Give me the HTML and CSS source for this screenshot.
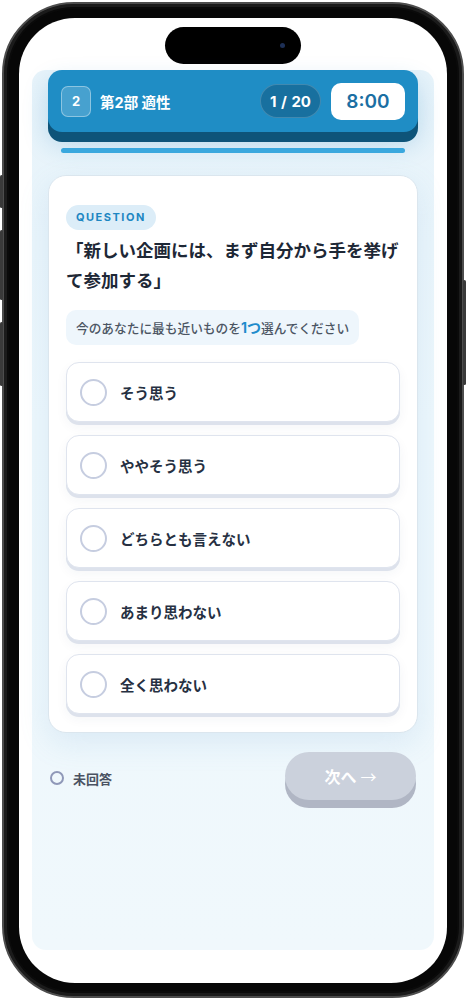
FILE: index.html
```html
<!DOCTYPE html>
<html lang="ja">
<head>
    <meta charset="UTF-8">
    <meta name="viewport" content="width=device-width, initial-scale=1.0">
    <title>適性検査 第2部</title>
    <link rel="stylesheet" href="styles.css">
</head>
<body>
    <div class="phone">
        <span class="side-btn btn-action"></span>
        <span class="side-btn btn-vol-up"></span>
        <span class="side-btn btn-vol-down"></span>
        <span class="side-btn btn-power"></span>

        <div class="screen">
            <div class="island"><span class="cam"></span></div>

            <div class="app">
                <header class="topbar">
                    <div class="part">
                        <span class="part-no">2</span>
                        <span class="part-name">第2部 適性</span>
                    </div>
                    <div class="status">
                        <span class="count">1 / 20</span>
                        <span class="timer">8:00</span>
                    </div>
                </header>

                <div class="progress"></div>

                <section class="card">
                    <span class="tag">QUESTION</span>
                    <h1 class="question">「新しい企画には、まず自分から手を挙げて参加する」</h1>
                    <p class="hint">今のあなたに最も近いものを<b>1つ</b>選んでください</p>

                    <ul class="options">
                        <li class="option"><span class="radio"></span>そう思う</li>
                        <li class="option"><span class="radio"></span>ややそう思う</li>
                        <li class="option"><span class="radio"></span>どちらとも言えない</li>
                        <li class="option"><span class="radio"></span>あまり思わない</li>
                        <li class="option"><span class="radio"></span>全く思わない</li>
                    </ul>
                </section>

                <div class="footer">
                    <div class="answer-state"><span class="dot"></span>未回答</div>
                    <button class="next" disabled>次へ <span class="arrow">→</span></button>
                </div>
            </div>
        </div>
    </div>
</body>
</html>
```

FILE: styles.css
```css
* { box-sizing: border-box; }

body {
    margin: 0;
    background: #ffffff;
    font-family: Inter, "Noto Sans CJK JP", "Noto Sans", sans-serif;
    color: #1e2836;
}

/* phone frame */
.phone {
    position: relative;
    width: 462px;
    height: 996px;
    margin: 2px 0 0 2px;
    padding: 14px 15px 13px 15px;
    background: #070707;
    border: 2px solid #4d4d4d;
    border-radius: 72px;
    box-shadow: inset 0 0 0 3px #1b1b1b, inset 0 0 0 5px #0a0a0a;
}

.side-btn {
    position: absolute;
    width: 3px;
    background: #3a3a3a;
    border-radius: 2px;
}
.btn-action { left: -4px; top: 171px; height: 33px; }
.btn-vol-up { left: -4px; top: 226px; height: 70px; }
.btn-vol-down { left: -4px; top: 318px; height: 64px; }
.btn-power { right: -4px; top: 276px; height: 105px; }

.screen {
    height: 100%;
    background: #ffffff;
    border-radius: 56px;
    overflow: hidden;
    padding-top: 9px;
}

.island {
    width: 136px;
    height: 37px;
    margin: 0 auto;
    background: #000;
    border-radius: 19px;
    display: flex;
    align-items: center;
    justify-content: flex-end;
    padding-right: 16px;
}
.cam {
    width: 5px;
    height: 5px;
    border-radius: 50%;
    background: #1d2f55;
}

/* app */
.app {
    height: 880px;
    margin: 6px 13px 0;
    padding: 0 16px;
    border-radius: 14px;
    background: linear-gradient(180deg, #e7f3fa 0%, #edf7fc 40%, #f0f8fc 100%);
    display: flex;
    flex-direction: column;
}

.topbar {
    height: 62px;
    padding: 0 13px;
    background: #1f8dc5;
    border-radius: 14px;
    box-shadow: 0 10px 0 #0e5479, 0 12px 24px rgba(30, 130, 190, 0.25);
    display: flex;
    align-items: center;
    justify-content: space-between;
    color: #fff;
}

.part { display: flex; align-items: center; gap: 9px; }
.part-no {
    width: 30px;
    height: 31px;
    border-radius: 7px;
    background: rgba(255, 255, 255, 0.18);
    border: 1px solid rgba(255, 255, 255, 0.38);
    display: flex;
    align-items: center;
    justify-content: center;
    font-size: 13px;
    font-weight: 700;
}
.part-name { font-size: 14.5px; font-weight: 700; }

.status { display: flex; align-items: center; gap: 10px; }
.count {
    width: 61px;
    height: 34px;
    border-radius: 17px;
    background: #18709f;
    border: 1px solid rgba(255, 255, 255, 0.18);
    display: flex;
    align-items: center;
    justify-content: center;
    font-size: 15px;
    font-weight: 700;
    word-spacing: 1px;
}
.timer {
    width: 74px;
    height: 37px;
    border-radius: 10px;
    background: #fff;
    color: #1b6fa3;
    display: flex;
    align-items: center;
    justify-content: center;
    font-size: 19px;
    font-weight: 600;
}

.progress {
    height: 5px;
    margin: 16px 13px 0;
    border-radius: 3px;
    background: #3aa8de;
}

/* question card */
.card {
    margin-top: 22px;
    height: 558px;
    padding: 29px 17px 0;
    background: #fff;
    border: 1px solid #dbe6ee;
    border-radius: 18px;
    box-shadow: 0 10px 30px rgba(110, 170, 210, 0.16);
}

.tag {
    display: inline-block;
    height: 25px;
    line-height: 25px;
    padding: 0 10px;
    border-radius: 13px;
    background: #dcedf8;
    color: #1d86c2;
    font-size: 11px;
    font-weight: 700;
    letter-spacing: 1.5px;
}

.question {
    margin: 6px 0 0;
    font-size: 17.5px;
    line-height: 30px;
    font-weight: 700;
    color: #1e2836;
}

.hint {
    display: inline-block;
    margin: 14px 0 0;
    height: 35px;
    line-height: 35px;
    padding: 0 10px;
    border-radius: 10px;
    background: #eef6fc;
    color: #4b5563;
    font-size: 12.7px;
    font-weight: 500;
}
.hint b { color: #1f8ccc; font-weight: 700; font-size: 14px; }

.options {
    list-style: none;
    margin: 17px 0 0;
    padding: 0;
    display: flex;
    flex-direction: column;
    gap: 13px;
}
.option {
    height: 60px;
    padding-left: 13px;
    border: 1px solid #dfe4ee;
    border-radius: 13px;
    background: #fff;
    box-shadow: 0 3px 0 #dde2ec, 0 5px 12px rgba(40, 60, 100, 0.05);
    display: flex;
    align-items: center;
    gap: 13px;
    font-size: 14.5px;
    font-weight: 700;
    color: #263042;
}
.radio {
    width: 27px;
    height: 27px;
    border-radius: 50%;
    border: 2px solid #c6cde0;
}

/* footer */
.footer {
    margin-top: 19px;
    padding: 0 2px;
    display: flex;
    align-items: center;
    justify-content: space-between;
}
.answer-state {
    display: flex;
    align-items: center;
    gap: 9px;
    font-size: 13px;
    font-weight: 700;
    color: #4a5262;
    margin-top: -4px;
}
.dot {
    width: 14px;
    height: 14px;
    border-radius: 50%;
    border: 2.5px solid #8f98b8;
}
.next {
    width: 131px;
    height: 48px;
    border: none;
    border-radius: 24px;
    background: #cbd1dc;
    box-shadow: 0 8px 0 #b0b6c4;
    color: #fff;
    font-family: inherit;
    font-size: 16px;
    font-weight: 700;
    margin-bottom: 8px;
}
.arrow { font-family: "Noto Sans CJK JP", sans-serif; font-weight: 400; }
```
